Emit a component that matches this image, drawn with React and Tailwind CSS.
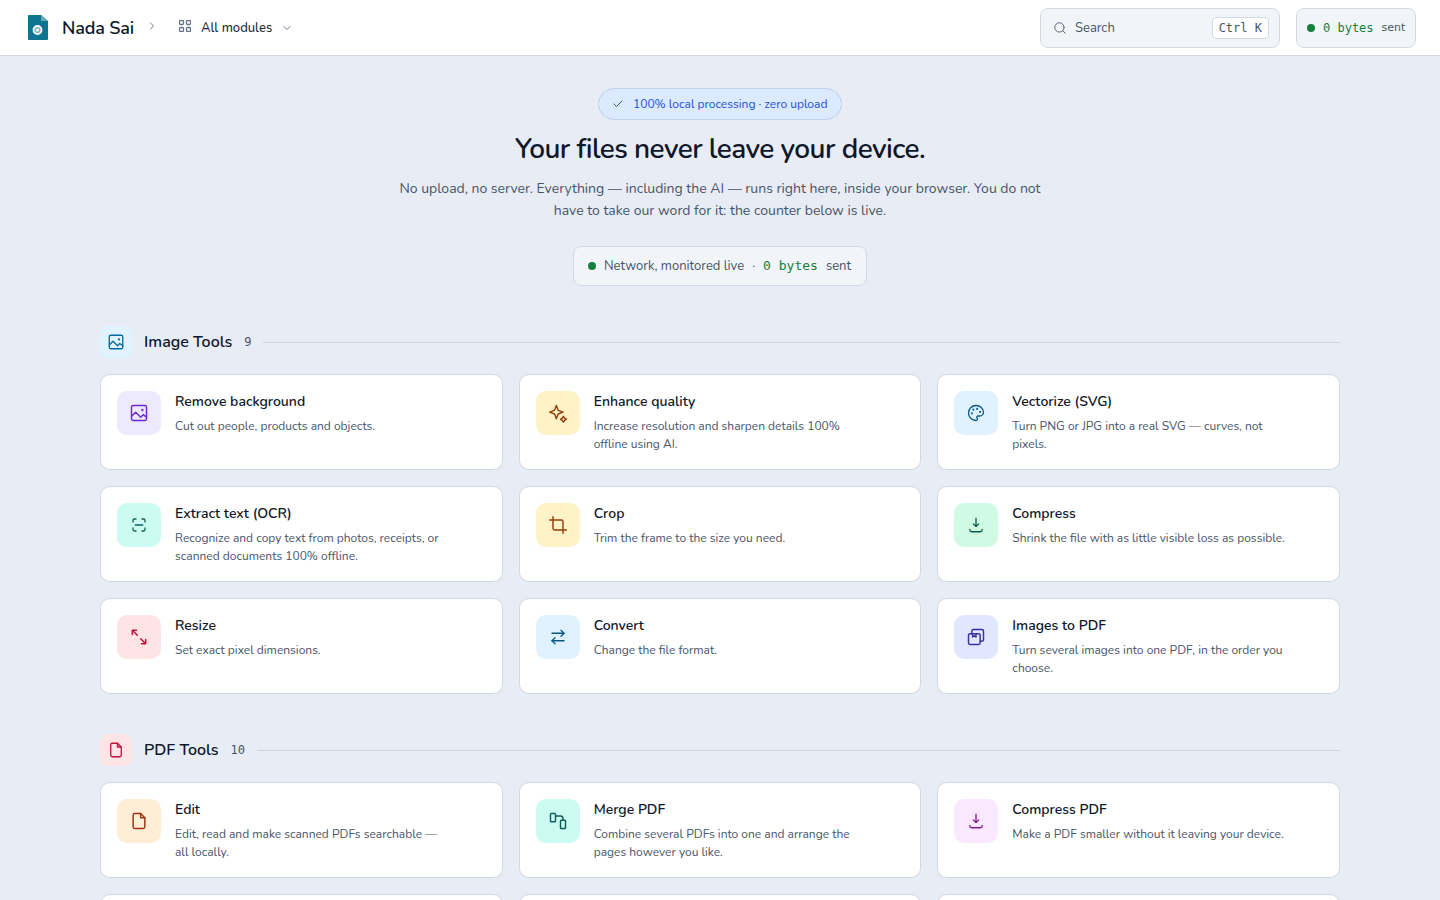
import React from "react";
import { ArrowRightLeft, Check, ChevronDown, ChevronRight, Crop, Palette, Search } from "lucide-react";

function Svg({ children, size = 20, className = "" }) {
    return (
        <svg
            width={size}
            height={size}
            viewBox="0 0 24 24"
            fill="none"
            stroke="currentColor"
            strokeWidth="1.75"
            strokeLinecap="round"
            strokeLinejoin="round"
            className={className}
        >
            {children}
        </svg>
    );
}

const ImageWave = (p) => (
    <Svg {...p}>
        <rect x="3" y="3" width="18" height="18" rx="2" />
        <path d="M3 16l5-5 6 6 3-3 4 3" />
        <circle cx="16" cy="8.5" r="0.6" />
    </Svg>
);
const FileIcon = (p) => (
    <Svg {...p}>
        <path d="M14 3H7a2 2 0 0 0-2 2v14a2 2 0 0 0 2 2h10a2 2 0 0 0 2-2V8z" />
        <path d="M14 3v5h5" />
    </Svg>
);
const Sparkle = (p) => (
    <Svg {...p}>
        <path d="M10 3l2.200 5.800L18 11l-5.800 2.200L10 19l-2.200-5.800L2 11l5.800-2.200z" />
        <path d="M18.500 16l1.300 2.200L22 19.500l-2.200 1.300-1.300 2.200-1.300-2.200-2.200-1.300 2.200-1.300z" />
    </Svg>
);
const Scan = (p) => (
    <Svg {...p}>
        <path d="M4 8V6a2 2 0 0 1 2-2h2M16 4h2a2 2 0 0 1 2 2v2M20 16v2a2 2 0 0 1-2 2h-2M8 20H6a2 2 0 0 1-2-2v-2M7 12h10" />
    </Svg>
);
const Tray = (p) => (
    <Svg {...p}>
        <path d="M12 3v11M8.500 10.500l3.500 3.500 3.500-3.500M4 18v1a2 2 0 0 0 2 2h12a2 2 0 0 0 2-2v-1" />
    </Svg>
);
const Expand = (p) => (
    <Svg {...p}>
        <path d="M4 4l6 6M4 9V4h5M20 20l-6-6M20 15v5h-5" />
    </Svg>
);
const Stack = (p) => (
    <Svg {...p}>
        <rect x="3" y="8" width="14" height="13" rx="2" />
        <path d="M7 8V5a2 2 0 0 1 2-2h10a2 2 0 0 1 2 2v10a2 2 0 0 1-2 2h-2" />
        <path d="M8 8v4l2-1.500L12 12V8" />
    </Svg>
);
const Merge = (p) => (
    <Svg {...p}>
        <rect x="3" y="3" width="6" height="10" rx="1" />
        <rect x="15" y="11" width="6" height="10" rx="1" />
        <path d="M9 6h6a3 3 0 0 1 3 3v2" />
    </Svg>
);

const imageTools = [
    { title: "Remove background", desc: "Cut out people, products and objects.", icon: ImageWave, tone: "bg-[#ede9fe] text-[#6d28d9]" },
    { title: "Enhance quality", desc: "Increase resolution and sharpen details 100% offline using AI.", icon: Sparkle, tone: "bg-[#fef3c7] text-[#92400e]" },
    { title: "Vectorize (SVG)", desc: "Turn PNG or JPG into a real SVG — curves, not pixels.", icon: Palette, size: 18, tone: "bg-[#e0f2fe] text-[#075985]" },
    { title: "Extract text (OCR)", desc: "Recognize and copy text from photos, receipts, or scanned documents 100% offline.", icon: Scan, size: 18, tone: "bg-[#ccfbf1] text-[#115e59]" },
    { title: "Crop", desc: "Trim the frame to the size you need.", icon: Crop, tone: "bg-[#fef3c7] text-[#92400e]" },
    { title: "Compress", desc: "Shrink the file with as little visible loss as possible.", icon: Tray, size: 18, tone: "bg-[#d1fae5] text-[#065f46]" },
    { title: "Resize", desc: "Set exact pixel dimensions.", icon: Expand, tone: "bg-[#ffe4e6] text-[#be123c]" },
    { title: "Convert", desc: "Change the file format.", icon: ArrowRightLeft, size: 18, tone: "bg-[#e0f2fe] text-[#075985]" },
    { title: "Images to PDF", desc: "Turn several images into one PDF, in the order you choose.", icon: Stack, tone: "bg-[#e0e7ff] text-[#3730a3]" },
];

const pdfTools = [
    { title: "Edit", desc: "Edit, read and make scanned PDFs searchable — all locally.", icon: FileIcon, tone: "bg-[#ffedd5] text-[#9a3412]" },
    { title: "Merge PDF", desc: "Combine several PDFs into one and arrange the pages however you like.", icon: Merge, tone: "bg-[#ccfbf1] text-[#115e59]" },
    { title: "Compress PDF", desc: "Make a PDF smaller without it leaving your device.", icon: Tray, size: 18, tone: "bg-[#fae8ff] text-[#86198f]" },
    { title: "", desc: "", tone: "bg-[#e0f2fe]" },
    { title: "", desc: "", tone: "bg-[#e0e7ff]" },
    { title: "", desc: "", tone: "bg-[#ffe4e6]" },
];

function ToolCard({ tool }) {
    const Icon = tool.icon;
    return (
        <div className="h-[96px] flex gap-[14px] bg-white border border-[#d3d9e3] rounded-[10px] p-4">
            <div className={`w-11 h-11 shrink-0 rounded-[10px] flex items-center justify-center ${tool.tone}`}>
                {Icon && <Icon size={tool.size || 20} strokeWidth={1.75} />}
            </div>
            <div className="min-w-0 pr-[32px]">
                <h3 className="text-sm leading-[22px] font-semibold text-[#0f172a]">{tool.title}</h3>
                <p className="mt-[4px] text-xs leading-[18px] text-[#475569]">{tool.desc}</p>
            </div>
        </div>
    );
}

function Section({ title, count, icon: Icon, iconSize, tone, tools }) {
    return (
        <section>
            <div className="flex items-center h-8 mb-4">
                <div className={`w-8 h-8 rounded-lg flex items-center justify-center ${tone}`}>
                    <Icon size={iconSize} />
                </div>
                <h2 className="ml-3 text-base font-semibold text-[#0f172a]">{title}</h2>
                <span className="ml-3 text-xs text-[#475569] font-['DejaVu_Sans_Mono',monospace]">{count}</span>
                <div className="ml-3 flex-1 h-px bg-[#cfd5df]" />
            </div>
            <div className="grid grid-cols-3 gap-x-4 gap-y-4">
                {tools.map((t, i) => (
                    <ToolCard key={i} tool={t} />
                ))}
            </div>
        </section>
    );
}

function Dot() {
    return <span className="w-2 h-2 rounded-full bg-[#15803d] shrink-0" />;
}

export default function App() {
    return (
        <div className="h-screen overflow-hidden bg-[#e8ecf4] font-['Nunito','Noto_Sans',sans-serif]">
            {/* Top bar */}
            <header className="h-[56px] bg-white border-b border-[#d3d9e3] flex items-center pl-[28px] pr-6">
                <svg width="20" height="25" viewBox="0 0 20 25" className="shrink-0">
                    <path d="M1 0h12l7 6v18a1 1 0 0 1-1 1H1a1 1 0 0 1-1-1V1a1 1 0 0 1 1-1z" fill="#0e7490" />
                    <path d="M13 0l7 6h-7z" fill="#67a9bb" />
                    <circle cx="9.5" cy="15" r="4" fill="#7fb6c6" stroke="#fff" strokeWidth="1.800" />
                    <circle cx="9.5" cy="15" r="1.500" fill="#fff" />
                </svg>
                <span className="ml-[14px] mt-px text-[18px] tracking-[-0.18px] font-semibold text-[#0f172a]">Nada Sai</span>
                <ChevronRight size={12} className="ml-3 mb-1 text-[#64748b]" />
                <svg width="12" height="12" viewBox="0 0 12 12" fill="none" stroke="#64748b" strokeWidth="1.300" className="ml-[21px] mb-1">
                    <rect x="0.5" y="0.5" width="4" height="4" rx="1" />
                    <rect x="7.5" y="0.5" width="4" height="4" rx="1" />
                    <rect x="0.5" y="7.5" width="4" height="4" rx="1" />
                    <rect x="7.5" y="7.5" width="4" height="4" rx="1" />
                </svg>
                <span className="ml-[10px] mt-[2px] text-[13px] font-medium text-[#1e293b]">All modules</span>
                <ChevronDown size={12} className="ml-[9px] text-[#64748b]" />
                <div className="ml-auto w-[240px] h-10 flex items-center bg-[#f1f5f9] border border-[#d3d9e3] rounded-lg pl-3 pr-[10px]">
                    <Search size={14} strokeWidth={1.5} className="text-[#475569]" />
                    <span className="ml-[8px] mt-[2px] text-[13px] text-[#475569]">Search</span>
                    <kbd className="ml-auto h-[22px] px-[6px] flex items-center bg-white border border-[#d3d9e3] rounded text-xs text-[#475569] font-['DejaVu_Sans_Mono',monospace]">Ctrl K</kbd>
                </div>
                <div className="ml-4 w-[120px] h-10 flex items-center gap-2 bg-[#f1f5f9] border border-[#d3d9e3] rounded-lg pl-[10px]">
                    <Dot />
                    <span className="text-xs text-[#15803d] whitespace-nowrap font-['DejaVu_Sans_Mono',monospace]">0 bytes</span>
                    <span className="mt-px text-[11px] text-[#475569] font-['DejaVu_Sans',sans-serif]">sent</span>
                </div>
            </header>

            <main className="px-[100px] pt-8">
                {/* Hero */}
                <div className="flex flex-col items-center text-center">
                    <div className="h-8 w-[244px] flex items-center gap-[9px] pl-[13px] rounded-full bg-[#dbeafe] border border-[#bfcfee] text-xs text-[#1d4ed8]">
                        <Check size={12} className="text-[#475569]" />
                        <span>100% local processing · zero upload</span>
                    </div>
                    <h1 className="mt-[13px] text-[28px] leading-[32px] tracking-[-0.56px] font-semibold text-[#0f172a]">Your files never leave your device.</h1>
                    <p className="mt-[13px] w-[660px] text-sm leading-[22px] text-[#475569]">
                        No upload, no server. Everything — including the AI — runs right here, inside your browser. You do not have to take our word for it: the counter below is live.
                    </p>
                    <div className="mt-6 h-10 w-[294px] flex items-center gap-2 pl-[14px] bg-[#f1f5f9] border border-[#d3d9e3] rounded-lg text-[13px] text-[#475569]">
                        <Dot />
                        <span className="mt-px">Network, monitored live</span>
                        <span className="mt-px">·</span>
                        <span className="font-['DejaVu_Sans_Mono',monospace] text-[13px] text-[#15803d] whitespace-nowrap">0 bytes</span>
                        <span className="mt-px">sent</span>
                    </div>
                </div>

                <div className="mt-10">
                    <Section title="Image Tools" count="9" icon={ImageWave} iconSize={18} tone="bg-[#e0f2fe] text-[#0369a1]" tools={imageTools} />
                </div>
                <div className="mt-10">
                    <Section title="PDF Tools" count="10" icon={FileIcon} iconSize={18} tone="bg-[#ffe4e6] text-[#be123c]" tools={pdfTools} />
                </div>
            </main>
        </div>
    );
}
